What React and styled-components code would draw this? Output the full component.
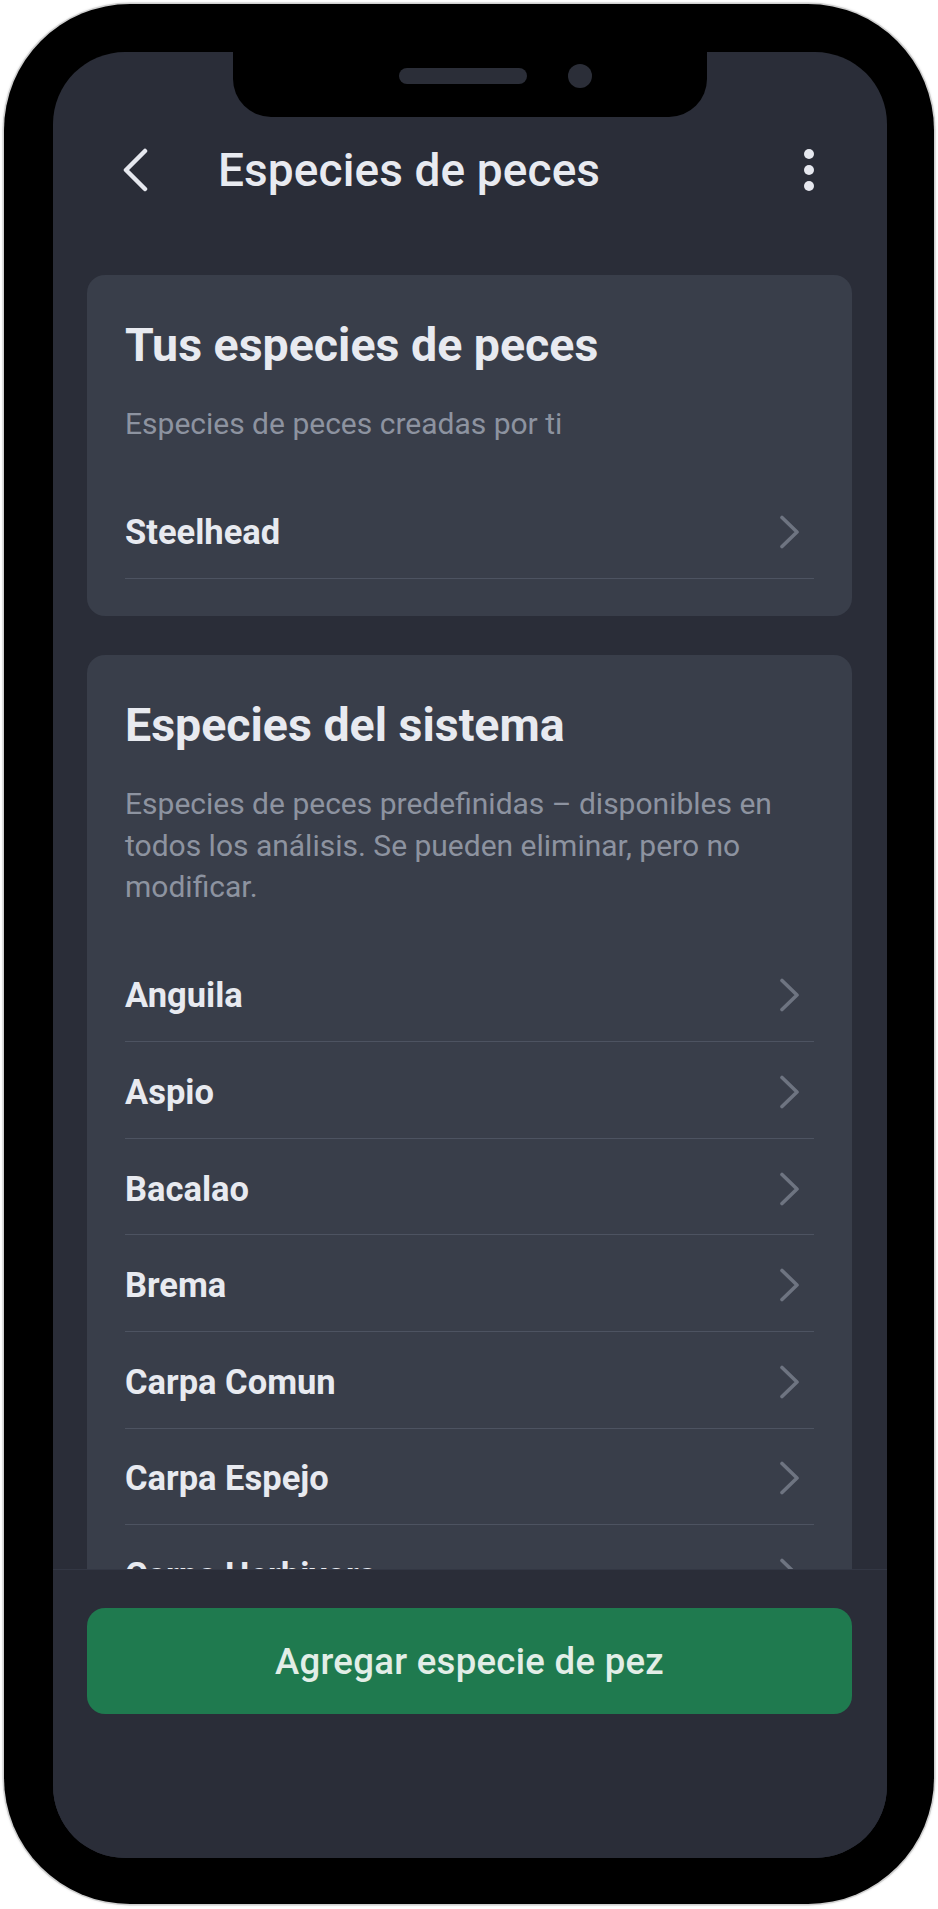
import React from 'react';
import styled, { createGlobalStyle } from 'styled-components';

const GlobalStyle = createGlobalStyle`
  html, body {
    margin: 0;
    padding: 0;
    background: #ffffff;
  }
  body {
    font-family: Roboto, "Noto Sans", "Liberation Sans", sans-serif;
    -webkit-font-smoothing: antialiased;
  }
  * {
    box-sizing: border-box;
  }
`;

const Page = styled.div`
  width: 938px;
  height: 1909px;
  padding: 4px 4px 5px 4px;
`;

const Phone = styled.div`
  width: 930px;
  height: 1900px;
  background: #000000;
  border-radius: 126px;
  box-shadow: 0 0 0 1.5px #cfcfcf, 0 0 3px 1px rgba(0, 0, 0, 0.15);
  padding: 48px 47px 46px 49px;
`;

const Screen = styled.div`
  position: relative;
  width: 834px;
  height: 1806px;
  background: #2a2d38;
  border-radius: 72px;
  overflow: hidden;
  display: flex;
  flex-direction: column;
`;

const Notch = styled.div`
  position: absolute;
  left: 180px;
  top: 0;
  width: 474px;
  height: 65px;
  background: #000000;
  border-radius: 0 0 38px 38px;
  z-index: 5;
`;

const Speaker = styled.div`
  position: absolute;
  left: 166px;
  top: 16px;
  width: 128px;
  height: 16px;
  border-radius: 8px;
  background: #2b2e38;
`;

const Camera = styled.div`
  position: absolute;
  left: 335px;
  top: 12px;
  width: 24px;
  height: 24px;
  border-radius: 50%;
  background: #2b2e38;
`;

const Header = styled.header`
  flex: none;
  height: 100px;
  margin-top: 68px;
  padding: 0 66px 0 69px;
  display: flex;
  align-items: center;
`;

const IconButton = styled.div`
  display: flex;
  align-items: center;
  justify-content: center;
  flex: none;
`;

const HeaderTitle = styled.h1`
  flex: 1;
  margin: 0 0 0 70px;
  font-size: 46px;
  line-height: 56px;
  font-weight: 500;
  color: #e8eaf0;
  letter-spacing: 0.1px;
`;

const Scroll = styled.main`
  flex: 1;
  min-height: 0;
  overflow: hidden;
  padding: 55px 35px 0 34px;
  display: flex;
  flex-direction: column;
  gap: 39px;
`;

const Card = styled.section`
  flex: none;
  background: #393e4a;
  border-radius: 18px;
  padding: 42px 38px 37px;
`;

const CardTitle = styled.h2`
  margin: 0;
  font-size: 46.5px;
  line-height: 56px;
  font-weight: 700;
  color: #e8eaf0;
`;

const CardText = styled.p`
  margin: 30px 0 0;
  font-size: 30px;
  line-height: 41.5px;
  font-weight: 400;
  color: #8d93a0;
`;

const List = styled.div`
  margin-top: 38px;
  display: flex;
  flex-direction: column;
`;

const Row = styled.div`
  height: 96.6px;
  padding-top: 4px;
  border-bottom: 1.5px solid #4d5361;
  display: flex;
  align-items: center;
  justify-content: space-between;

  svg {
    margin-right: 13px;
  }
`;

const RowLabel = styled.span`
  font-size: 34.5px;
  font-weight: 700;
  color: #e8eaf0;
`;

const BottomBar = styled.footer`
  flex: none;
  height: 289px;
  background: #2a2d38;
  border-top: 1px solid #333744;
  padding: 38px 35px 0 34px;
  position: relative;
  z-index: 2;
`;

const PrimaryButton = styled.button`
  width: 100%;
  height: 106px;
  border: none;
  border-radius: 18px;
  background: #1f7a4f;
  color: #e2eee7;
  font-family: Roboto, "Noto Sans", sans-serif;
  font-size: 36.5px;
  letter-spacing: 0.3px;
  font-weight: 500;
  cursor: pointer;
`;

const BackIcon = () => (
  <svg width="26" height="44" viewBox="0 0 26 44">
    <path d="M23 3 L4 22 L23 41" fill="none" stroke="#e6e8ef" strokeWidth="4.5" strokeLinecap="round" strokeLinejoin="round" />
  </svg>
);

const MoreIcon = () => (
  <svg width="24" height="46" viewBox="0 0 24 46">
    <circle cx="12" cy="7" r="5" fill="#e6e8ef" />
    <circle cx="12" cy="23" r="5" fill="#e6e8ef" />
    <circle cx="12" cy="39" r="5" fill="#e6e8ef" />
  </svg>
);

const ChevronIcon = () => (
  <svg width="22" height="34" viewBox="0 0 22 34">
    <path d="M3 2.5 L18 17 L3 31.5" fill="none" stroke="#6e7481" strokeWidth="3.6" strokeLinecap="round" strokeLinejoin="round" />
  </svg>
);

const mine = ['Steelhead'];
const system = [
  'Anguila',
  'Aspio',
  'Bacalao',
  'Brema',
  'Carpa Comun',
  'Carpa Espejo',
  'Carpa Herbivora',
];

const SpeciesRow = ({ name }) => (
  <Row>
    <RowLabel>{name}</RowLabel>
    <ChevronIcon />
  </Row>
);

const App = () => (
  <Page>
    <GlobalStyle />
    <Phone>
      <Screen>
        <Notch>
          <Speaker />
          <Camera />
        </Notch>

        <Header>
          <IconButton>
            <BackIcon />
          </IconButton>
          <HeaderTitle>Especies de peces</HeaderTitle>
          <IconButton>
            <MoreIcon />
          </IconButton>
        </Header>

        <Scroll>
          <Card>
            <CardTitle>Tus especies de peces</CardTitle>
            <CardText>Especies de peces creadas por ti</CardText>
            <List>
              {mine.map((n) => (
                <SpeciesRow key={n} name={n} />
              ))}
            </List>
          </Card>

          <Card>
            <CardTitle>Especies del sistema</CardTitle>
            <CardText>
              Especies de peces predefinidas – disponibles en todos los análisis. Se pueden eliminar, pero no modificar.
            </CardText>
            <List>
              {system.map((n) => (
                <SpeciesRow key={n} name={n} />
              ))}
            </List>
          </Card>
        </Scroll>

        <BottomBar>
          <PrimaryButton>Agregar especie de pez</PrimaryButton>
        </BottomBar>
      </Screen>
    </Phone>
  </Page>
);

export default App;
